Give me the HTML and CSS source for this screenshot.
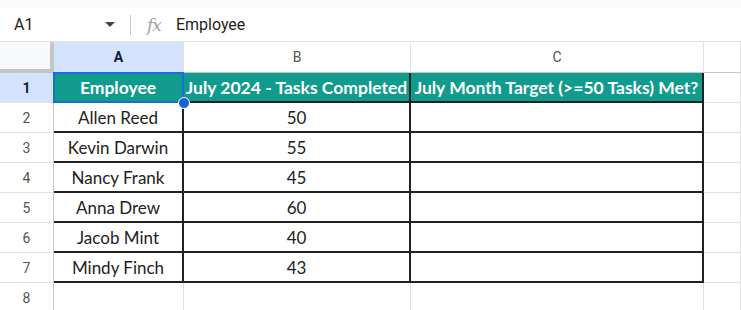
FILE: index.html
```html
<!DOCTYPE html>
<html lang="en">
<head>
    <meta charset="UTF-8">
    <title>Sheet</title>
    <link rel="stylesheet" href="styles.css">
</head>
<body>
    <div class="topstrip"></div>
    <div class="formula-bar">
        <div class="name-box">A1</div>
        <svg class="caret" width="10" height="6" viewBox="0 0 10 6"><path d="M0 0 L10 0 L5 5 Z" fill="#444"/></svg>
        <div class="sep"></div>
        <span class="fx">fx</span>
        <span class="formula">Employee</span>
    </div>
    <div class="grid">
        <div class="corner"></div>
        <div class="colhead active">A</div>
        <div class="colhead">B</div>
        <div class="colhead">C</div>
        <div class="colhead"></div>

        <div class="rowhead active">1</div>
        <div class="cell head sel">Employee<span class="handle"></span></div>
        <div class="cell head">July 2024 - Tasks Completed</div>
        <div class="cell head">July Month Target (&gt;=50 Tasks) Met?</div>
        <div class="cell"></div>

        <div class="rowhead">2</div>
        <div class="cell data">Allen Reed</div>
        <div class="cell data">50</div>
        <div class="cell data"></div>
        <div class="cell"></div>

        <div class="rowhead">3</div>
        <div class="cell data">Kevin Darwin</div>
        <div class="cell data">55</div>
        <div class="cell data"></div>
        <div class="cell"></div>

        <div class="rowhead">4</div>
        <div class="cell data">Nancy Frank</div>
        <div class="cell data">45</div>
        <div class="cell data"></div>
        <div class="cell"></div>

        <div class="rowhead">5</div>
        <div class="cell data">Anna Drew</div>
        <div class="cell data">60</div>
        <div class="cell data"></div>
        <div class="cell"></div>

        <div class="rowhead">6</div>
        <div class="cell data">Jacob Mint</div>
        <div class="cell data">40</div>
        <div class="cell data"></div>
        <div class="cell"></div>

        <div class="rowhead">7</div>
        <div class="cell data">Mindy Finch</div>
        <div class="cell data">43</div>
        <div class="cell data"></div>
        <div class="cell"></div>

        <div class="rowhead">8</div>
        <div class="cell"></div>
        <div class="cell"></div>
        <div class="cell"></div>
        <div class="cell"></div>
    </div>
</body>
</html>
```

FILE: styles.css
```css
* {
    box-sizing: border-box;
}
body {
    margin: 0;
    background: #fff;
    font-family: Roboto, "Liberation Sans", Arial, sans-serif;
    overflow: hidden;
}
.topstrip {
    height: 8px;
    background: #f9fbfd;
}
.formula-bar {
    height: 34px;
    display: flex;
    align-items: center;
    border-bottom: 1px solid #e1e3e1;
}
.name-box {
    width: 105px;
    padding-left: 14px;
    font-size: 16px;
    color: #1f1f1f;
}
.caret {
    margin-top: 1px;
}
.sep {
    width: 1px;
    height: 20px;
    background: #c7c7c7;
    margin-left: 15px;
}
.fx {
    margin-left: 16px;
    font-family: "DejaVu Serif", serif;
    font-style: italic;
    font-size: 17px;
    color: #a0a0a0;
    letter-spacing: -1px;
}
.formula {
    margin-left: 15px;
    font-size: 16px;
    color: #1f1f1f;
}
.grid {
    display: grid;
    grid-template-columns: 54px 130px 227px 293px 1fr;
    grid-template-rows: 31px repeat(8, 30px);
}
.corner {
    background: #f8f9fa;
    border-right: 4px solid #c4c7c5;
    border-bottom: 4px solid #c4c7c5;
}
.colhead {
    display: flex;
    align-items: center;
    justify-content: center;
    font-size: 14px;
    color: #555;
    border-right: 1px solid #e1e3e1;
    border-bottom: 1px solid #c4c7c5;
}
.colhead.active {
    background: #d3e3fd;
    color: #0b1a45;
    font-weight: bold;
}
.rowhead {
    display: flex;
    align-items: center;
    justify-content: center;
    font-size: 14px;
    color: #555;
    border-right: 1px solid #c4c7c5;
    border-bottom: 1px solid #e1e3e1;
}
.rowhead.active {
    background: #d3e3fd;
    color: #0b1a45;
    font-weight: bold;
}
.cell {
    display: flex;
    align-items: center;
    justify-content: center;
    font-family: Lato, "Open Sans", sans-serif;
    font-size: 17px;
    color: #222;
    border-right: 1px solid #e1e3e1;
    border-bottom: 1px solid #e1e3e1;
    white-space: nowrap;
}
.cell.head {
    background: #109b8d;
    color: #fff;
    font-weight: bold;
    font-size: 17.5px;
    border-right: 2px solid #222;
    border-bottom: 2px solid #222;
}
.cell.data {
    border-right: 2px solid #222;
    border-bottom: 2px solid #222;
}
.cell.sel {
    position: relative;
    border-right-color: #109b8d;
}
.cell.sel::after {
    content: "";
    position: absolute;
    inset: -1px -2px -2px -1px;
    border: 2px solid #1a6ae0;
}
.handle {
    position: absolute;
    right: -8px;
    bottom: -8px;
    width: 12px;
    height: 12px;
    border-radius: 50%;
    background: #1a5fd6;
    border: 1px solid #fff;
    z-index: 2;
}
```
